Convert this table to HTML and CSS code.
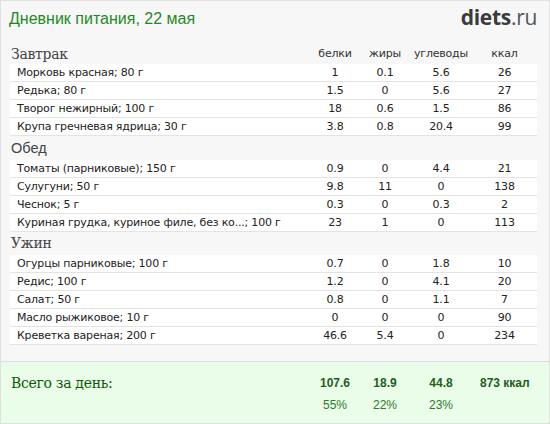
FILE: index.html
```html
<!DOCTYPE html>
<html lang="ru">
<head>
<meta charset="utf-8">
<title>Дневник питания</title>
<link rel="stylesheet" href="styles.css">
</head>
<body>
<div class="diary">
  <header class="top">
    <h1 class="title">Дневник питания, 22 мая</h1>
    <div class="logo"><b>diets</b>.ru</div>
  </header>
  <table class="food">
    <colgroup>
      <col class="c-name"><col class="c-p"><col class="c-f"><col class="c-c"><col class="c-k">
    </colgroup>
    <tbody>
      <tr class="meal first"><th class="meal-name serif">Завтрак</th><th class="lbl">белки</th><th class="lbl">жиры</th><th class="lbl">углеводы</th><th class="lbl">ккал</th></tr>
      <tr class="item"><td class="name">Морковь красная; 80 г</td><td>1</td><td>0.1</td><td>5.6</td><td>26</td></tr>
      <tr class="item"><td class="name">Редька; 80 г</td><td>1.5</td><td>0</td><td>5.6</td><td>27</td></tr>
      <tr class="item"><td class="name">Творог нежирный; 100 г</td><td>18</td><td>0.6</td><td>1.5</td><td>86</td></tr>
      <tr class="item"><td class="name">Крупа гречневая ядрица; 30 г</td><td>3.8</td><td>0.8</td><td>20.4</td><td>99</td></tr>
      <tr class="meal"><th class="meal-name sans" colspan="5">Обед</th></tr>
      <tr class="item"><td class="name">Томаты (парниковые); 150 г</td><td>0.9</td><td>0</td><td>4.4</td><td>21</td></tr>
      <tr class="item"><td class="name">Сулугуни; 50 г</td><td>9.8</td><td>11</td><td>0</td><td>138</td></tr>
      <tr class="item"><td class="name">Чеснок; 5 г</td><td>0.3</td><td>0</td><td>0.3</td><td>2</td></tr>
      <tr class="item"><td class="name">Куриная грудка, куриное филе, без ко...; 100 г</td><td>23</td><td>1</td><td>0</td><td>113</td></tr>
      <tr class="meal"><th class="meal-name serif" colspan="5">Ужин</th></tr>
      <tr class="item"><td class="name">Огурцы парниковые; 100 г</td><td>0.7</td><td>0</td><td>1.8</td><td>10</td></tr>
      <tr class="item"><td class="name">Редис; 100 г</td><td>1.2</td><td>0</td><td>4.1</td><td>20</td></tr>
      <tr class="item"><td class="name">Салат; 50 г</td><td>0.8</td><td>0</td><td>1.1</td><td>7</td></tr>
      <tr class="item"><td class="name">Масло рыжиковое; 10 г</td><td>0</td><td>0</td><td>0</td><td>90</td></tr>
      <tr class="item"><td class="name">Креветка вареная; 200 г</td><td>46.6</td><td>5.4</td><td>0</td><td>234</td></tr>
    </tbody>
  </table>
  <footer class="total">
    <table class="sum">
      <colgroup>
        <col class="c-name"><col class="c-p"><col class="c-f"><col class="c-c"><col class="c-k">
      </colgroup>
      <tr class="sum-main"><th class="sum-label">Всего за день:</th><td>107.6</td><td>18.9</td><td>44.8</td><td class="kcal">873 ккал</td></tr>
      <tr class="sum-pct"><th></th><td>55%</td><td>22%</td><td>23%</td><td></td></tr>
    </table>
  </footer>
</div>
</body>
</html>
```
FILE: styles.css
```css
html, body {
  margin: 0;
  padding: 0;
}
body {
  width: 550px;
  height: 424px;
  background: #f7f7f7;
}
.diary {
  box-sizing: border-box;
  width: 550px;
  height: 424px;
  border: 1px solid #e0e0e0;
  background: #f7f7f7;
  display: flex;
  flex-direction: column;
}
.top {
  display: flex;
  justify-content: space-between;
  align-items: flex-start;
  height: 41px;
  padding: 0 12px 0 8px;
}
.title {
  margin: 7px 0 0;
  font: normal 16px/21px "Liberation Sans", Arial, sans-serif;
  color: #1f8a1f;
}
.logo {
  margin-top: 2px;
  font: 21px/28px "Open Sans", sans-serif;
  color: #555;
  letter-spacing: -0.3px;
}
.logo b {
  font-weight: 700;
  color: #3b3b3b;
}
.food, .sum {
  border-collapse: collapse;
  table-layout: fixed;
  width: 527px;
  margin-left: 9px;
}
.c-name { width: 300px; }
.c-p { width: 50px; }
.c-f { width: 50px; }
.c-c { width: 62px; }
.c-k { width: 65px; }
.food td, .food th {
  padding: 0;
}
.meal th {
  height: 24px;
  vertical-align: bottom;
  font-weight: normal;
  text-align: left;
  padding-bottom: 3px;
  box-sizing: border-box;
}
.meal.first th {
  height: 22px;
  padding-bottom: 1px;
}
.meal-name {
  padding-left: 1px !important;
  color: #444;
}
.serif {
  font: 14px/18px "DejaVu Serif", Georgia, serif;
  letter-spacing: -0.3px;
}
.sans {
  font: 14.5px/18px "Liberation Sans", Arial, sans-serif;
}
.lbl {
  text-align: center !important;
  font: 11px/14px "DejaVu Sans", Verdana, sans-serif;
  letter-spacing: -0.2px;
  color: #333;
  padding-bottom: 3px !important;
}
.item td {
  background: #fff;
  border-bottom: 1px solid #e3e3e3;
  height: 17px;
  font: 11px/17px "DejaVu Sans", Verdana, sans-serif;
  letter-spacing: -0.2px;
  color: #222;
  text-align: center;
  white-space: nowrap;
  overflow: hidden;
}
.item td.name {
  text-align: left;
  padding-left: 7px;
}
.total {
  margin-top: auto;
  height: 62px;
  background: #eafde8;
  border-top: 1px solid #dcdcdc;
  padding-top: 12px;
  box-sizing: border-box;
}
.sum th, .sum td {
  padding: 0;
}
.sum-label {
  text-align: left;
  font: normal 14px/18px "DejaVu Serif", Georgia, serif;
  letter-spacing: -0.3px;
  color: #0b5a0b;
  padding-left: 1px !important;
}
.sum-main td {
  text-align: center;
  font: bold 12px/18px "Liberation Sans", Arial, sans-serif;
  color: #1d5f1d;
}
.sum-main td.kcal {
  text-align: left;
  padding-left: 8px;
}
.sum-pct td {
  text-align: center;
  font: 12px/26px "Liberation Sans", Arial, sans-serif;
  color: #2d7a2d;
}
```
